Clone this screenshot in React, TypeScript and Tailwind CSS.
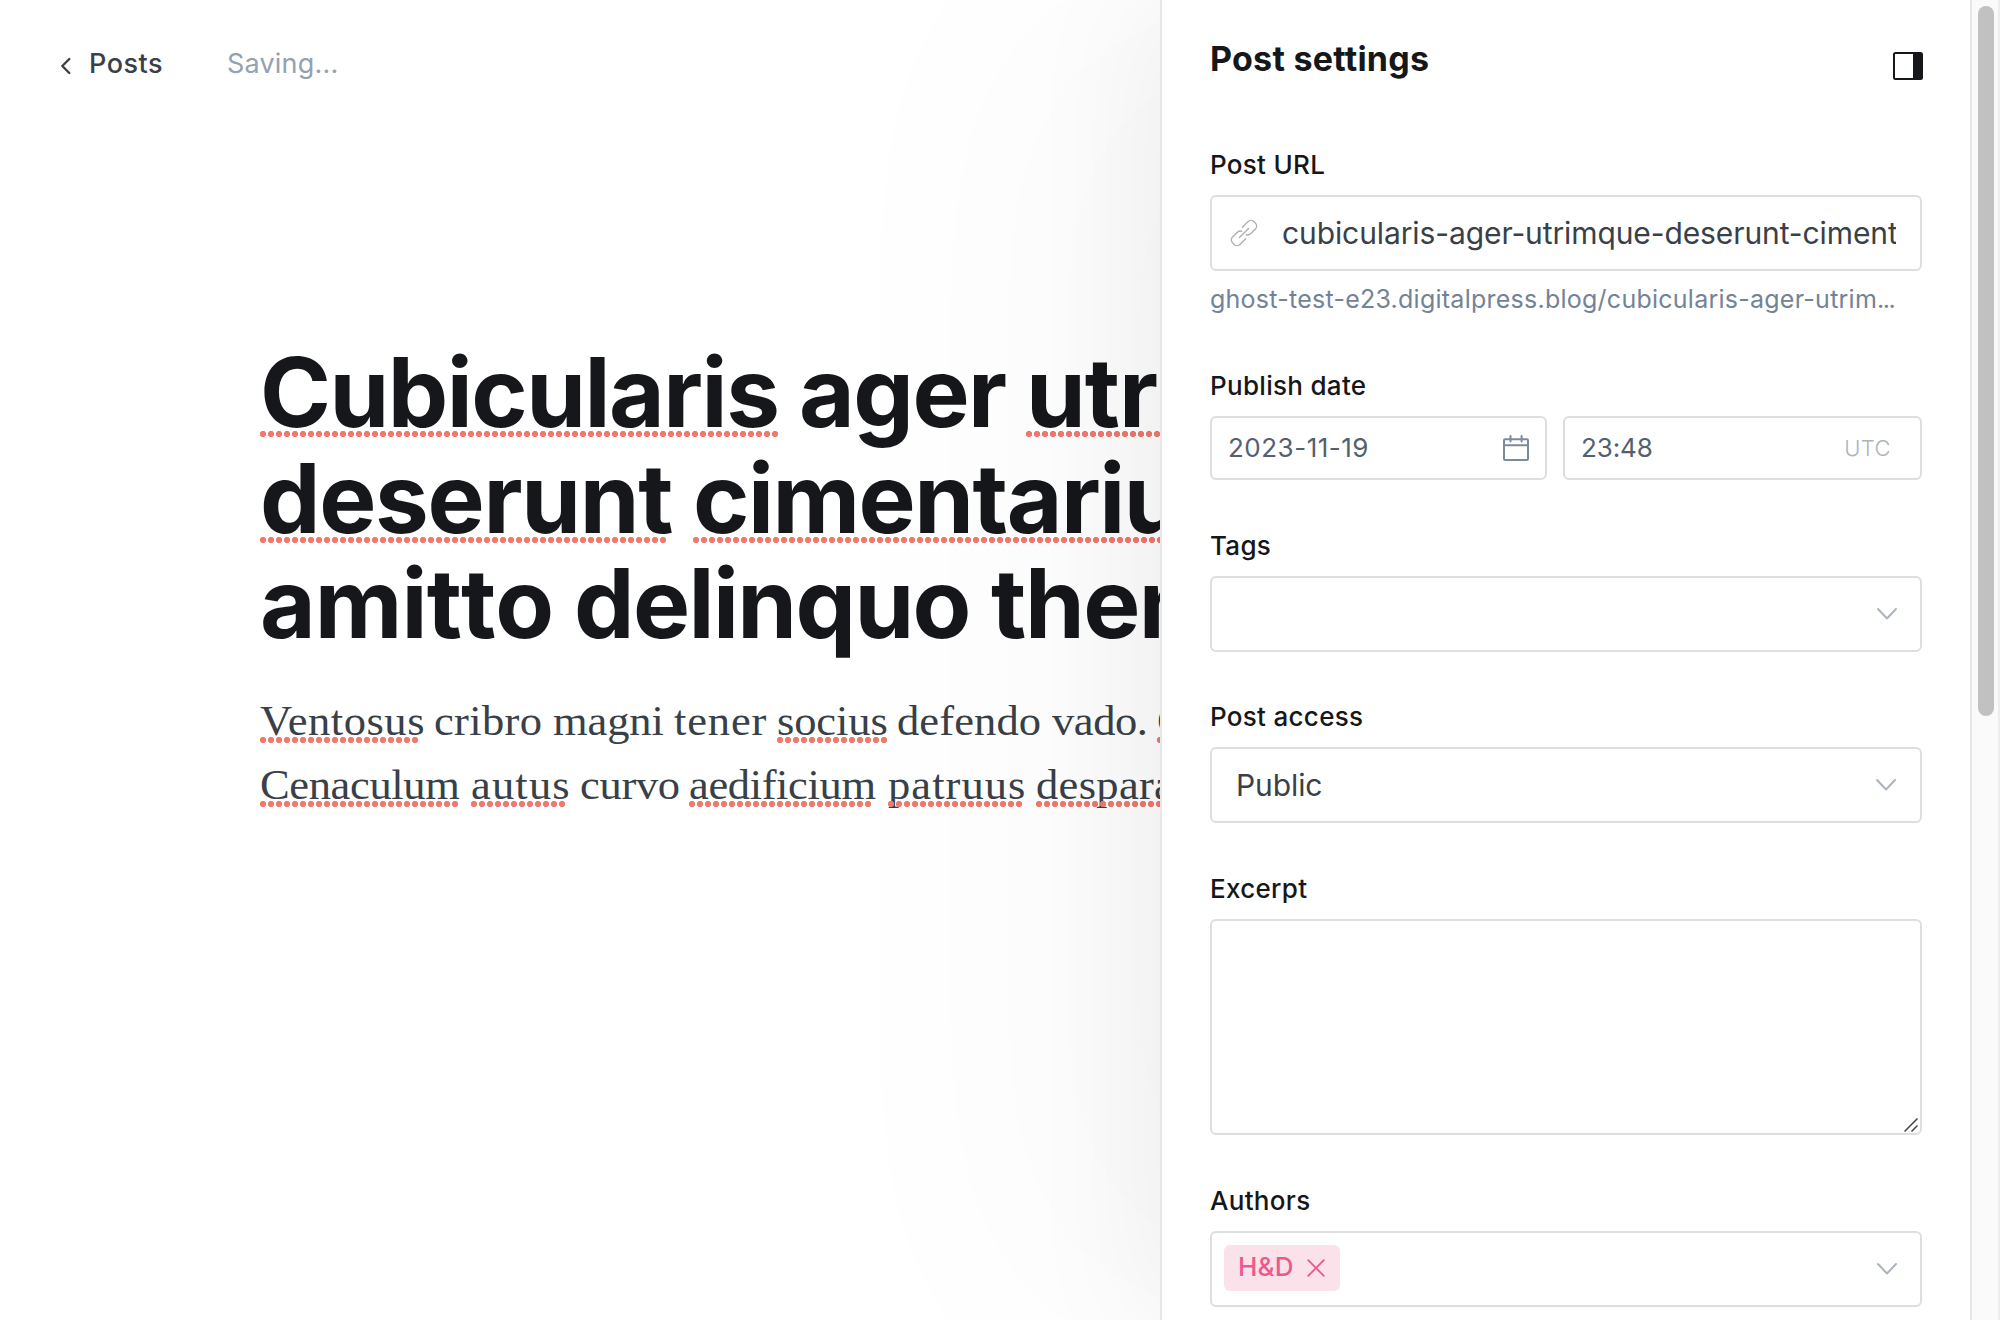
import type { ReactNode } from 'react';

type Word = { text: string; box: string; dots?: string; track: string };

const titleLines: Word[][] = [
  [
    { text: 'Cubicularis', box: 'w-[539px]', dots: 'w-[518px]', track: 'tracking-[-1.5px]' },
    { text: 'ager', box: 'w-[227px]', track: 'tracking-[-1.5px]' },
    { text: 'utrimque', box: 'w-[420px]', dots: 'w-[400px]', track: 'tracking-[-1px]' },
  ],
  [
    { text: 'deserunt', box: 'w-[433px]', dots: 'w-[406px]', track: 'tracking-[-1.3px]' },
    { text: 'cimentarius', box: 'w-[560px]', dots: 'w-[540px]', track: 'tracking-[-1.5px]' },
  ],
  [
    { text: 'amitto', box: 'w-[314px]', track: 'tracking-[-0.9px] [font-kerning:none] [font-feature-settings:"calt"_0,"liga"_0]' },
    { text: 'delinquo', box: 'w-[417px]', track: 'tracking-[-1.6px]' },
    { text: 'thema', box: 'w-[300px]', track: 'tracking-[-1.5px]' },
  ],
];

const bodyLines: Word[][] = [
  [
    { text: 'Ventosus', box: 'w-[174px]', dots: 'w-[158px]', track: 'tracking-[0.5px]' },
    { text: 'cribro', box: 'w-[119px]', track: 'tracking-[0.3px]' },
    { text: 'magni', box: 'w-[121px]', track: 'tracking-[-0.1px]' },
    { text: 'tener', box: 'w-[103px]', track: 'tracking-[0.8px]' },
    { text: 'socius', box: 'w-[120px]', dots: 'w-[110px]', track: 'tracking-[-0.1px]' },
    { text: 'defendo', box: 'w-[155px]', track: 'tracking-[0.1px]' },
    { text: 'vado.', box: 'w-[105px]', track: 'tracking-[-0.4px]' },
    { text: 'Cursus', box: 'w-[140px]', dots: 'w-[126px]', track: 'tracking-[0.2px]' },
  ],
  [
    { text: 'Cenaculum', box: 'w-[211px]', dots: 'w-[198px]', track: 'tracking-[-0.35px]' },
    { text: 'autus', box: 'w-[109px]', dots: 'w-[94px]', track: 'tracking-[1.1px]' },
    { text: 'curvo', box: 'w-[109px]', track: 'tracking-[-0.3px]' },
    { text: 'aedificium', box: 'w-[199px]', dots: 'w-[182px]', track: 'tracking-[-0.35px]' },
    { text: 'patruus', box: 'w-[148px]', dots: 'w-[134px]', track: 'tracking-[1px]' },
    { text: 'desparatus', box: 'w-[200px]', dots: 'w-[182px]', track: 'tracking-[0.3px]' },
  ],
];

const dotPattern =
  'absolute left-0 h-[6px] bg-[radial-gradient(circle_at_3px_3px,#f1786d_2.8px,transparent_3.4px)] bg-[length:8px_6px] bg-repeat-x';

function Label({ children }: { children: ReactNode }) {
  return (
    <div className="h-[47px] pt-px text-[26px] leading-8 font-medium tracking-[0.3px] text-[#15171a]">
      {children}
    </div>
  );
}

const field = 'rounded-md border-2 border-[#dddedf] bg-white';

function Chevron() {
  return (
    <svg width="22" height="14" viewBox="0 0 22 14" fill="none" stroke="#abb4be" strokeWidth="2" strokeLinecap="round" strokeLinejoin="round">
      <path d="M2 2l9 9.5L20 2" />
    </svg>
  );
}

function LinkIcon() {
  return (
    <svg width="28" height="28" viewBox="-14 -14 28 28" fill="none" stroke="#b0b1b2" strokeWidth="1.4" strokeLinecap="round">
      <g transform="rotate(-45)">
        <path d="M-6.5 0H6.5" />
        <path d="M3-5.2H11a4 4 0 0 1 4 4V1.2a4 4 0 0 1-4 4H4a4 4 0 0 1-3.6-2.3" />
        <path d="M-3 5.2H-11a4 4 0 0 1-4-4V-1.2a4 4 0 0 1 4-4H-4a4 4 0 0 1 3.6 2.3" />
      </g>
    </svg>
  );
}

function CalendarIcon() {
  return (
    <svg width="26" height="26" viewBox="0 0 26 26" fill="none" stroke="#7c8b9a" strokeWidth="2" strokeLinecap="round">
      <rect x="1" y="4.3" width="24" height="20.7" rx="1" />
      <path d="M1 10.2H25M7.5 1V6.5M18.6 1V6.5" />
    </svg>
  );
}

export default function App() {
  return (
    <div className="flex h-[1320px] w-[2000px] overflow-hidden bg-white font-[Inter,sans-serif]">
      <main className="w-[1160px] shrink-0 overflow-hidden">
        <header className="flex h-[126px] items-start pt-[48px] pl-[60px] text-[27px] leading-8">
          <svg className="mt-[9px]" width="12" height="18" viewBox="0 0 12 18" fill="none" stroke="#394047" strokeWidth="2.4" strokeLinecap="round" strokeLinejoin="round">
            <path d="M9.3 2L2.3 9l7 7" />
          </svg>
          <span className="ml-[17px] w-[138px] font-medium tracking-[0.5px] text-[#394047]">Posts</span>
          <span className="tracking-[0.2px] text-[#95a1b1]">Saving...</span>
        </header>

        <article className="pt-[214px] pl-[260px]">
          <h1 className="text-[96px] leading-[105.6px] font-bold text-[#15171a]">
            {titleLines.map((line, i) => (
              <span key={i} className="flex">
                {line.map((w) => (
                  <span key={w.text} className={`relative shrink-0 ${w.box} ${w.track}`}>
                    {w.text}
                    {w.dots && <i className={`${dotPattern} top-[91px] ${w.dots}`} />}
                  </span>
                ))}
              </span>
            ))}
          </h1>
          <p className="mt-8 font-['Liberation_Serif',serif] text-[42px] leading-[64px] text-[#394047]">
            {bodyLines.map((line, i) => (
              <span key={i} className="flex">
                {line.map((w) => (
                  <span key={w.text} className={`relative shrink-0 ${w.box} ${w.track}`}>
                    <span className="inline-block origin-left scale-x-[1.06]">{w.text}</span>
                    {w.dots && <i className={`${dotPattern} top-[48px] ${w.dots}`} />}
                  </span>
                ))}
              </span>
            ))}
          </p>
        </article>
      </main>

      <aside className="relative flex w-[812px] shrink-0 flex-col border-x-2 border-[#e7e7e8] bg-white px-12 shadow-[-150px_0_260px_rgba(0,0,0,0.022),-20px_0_120px_rgba(0,0,0,0.05)]">
        <div className="flex h-[148px] shrink-0 items-start justify-between pt-[39px]">
          <h2 className="text-[34px] leading-10 font-[650] tracking-[0.25px] text-[#15171a]">Post settings</h2>
          <svg className="mt-[13px] -mr-px" width="30" height="28" viewBox="0 0 30 28">
            <rect x="1" y="1" width="28" height="26" rx="1.5" fill="none" stroke="#15171a" strokeWidth="2" />
            <path d="M20 1H28.5V27H20Z" fill="#15171a" />
          </svg>
        </div>

        <section className="h-[221px] shrink-0">
          <Label>Post URL</Label>
          <div className={`${field} flex h-[76px] items-center pl-[18px]`}>
            <LinkIcon />
            <span className="ml-6 w-[614px] overflow-hidden text-[30px] leading-9 tracking-[-0.1px] whitespace-nowrap text-[#394047]">
              cubicularis-ager-utrimque-deserunt-cimentarius
            </span>
          </div>
          <p className="mt-[12px] text-[25px] leading-8 tracking-[0.25px] whitespace-nowrap text-[#738397]">
            ghost-test-e23.digitalpress.blog/cubicularis-ager-utrim<span className="tracking-[-1.5px]">...</span>
          </p>
        </section>

        <section className="mb-[49px] shrink-0">
          <Label>Publish date</Label>
          <div className="flex gap-4 text-[26px] leading-8 text-[#54606e]">
            <div className={`${field} flex h-16 w-[337px] items-center justify-between pr-4 pl-4`}>
              <span className="tracking-[0.5px]">2023-11-19</span>
              <CalendarIcon />
            </div>
            <div className={`${field} flex h-16 flex-1 items-center justify-between pr-[29px] pl-4`}>
              <span className="tracking-[-0.1px]">23:48</span>
              <span className="text-[22px] font-light tracking-[0.4px] text-[#abb4be]">UTC</span>
            </div>
          </div>
        </section>

        <section className="mb-12 shrink-0">
          <Label>Tags</Label>
          <div className={`${field} flex h-[76px] items-center justify-end pr-[22px]`}>
            <Chevron />
          </div>
        </section>

        <section className="mb-[49px] shrink-0">
          <Label>Post access</Label>
          <div className={`${field} flex h-[76px] items-center justify-between pr-[23px] pl-6`}>
            <span className="text-[30px] leading-9 tracking-[-0.1px] text-[#394047]">Public</span>
            <Chevron />
          </div>
        </section>

        <section className="mb-[49px] shrink-0">
          <Label>Excerpt</Label>
          <div className={`${field} flex h-[216px] items-end justify-end pr-[2px] pb-[1px]`}>
            <svg width="14" height="14" viewBox="0 0 14 14" stroke="#444" strokeWidth="1.5">
              <path d="M.5 13.5L13.5.5M7.5 13.5l6-6" />
            </svg>
          </div>
        </section>

        <section className="shrink-0">
          <Label>Authors</Label>
          <div className={`${field} flex h-[76px] items-center justify-between pr-[22px] pl-3`}>
            <span className="-mt-[2px] flex h-[46px] w-[116px] items-center rounded-md bg-[#fbe1ea] pl-[14px] text-[26px] leading-8 font-medium tracking-[0.2px] text-[#eb5a8c]">
              <span className="-mt-[2px]">H&amp;D</span>
              <svg className="ml-[13px]" width="18" height="18" viewBox="0 0 18 18" stroke="#eb5a8c" strokeWidth="1.8" strokeLinecap="round">
                <path d="M1.2 1.2l15.6 15.6M16.8 1.2L1.2 16.8" />
              </svg>
            </span>
            <Chevron />
          </div>
        </section>
      </aside>

      <div className="relative w-7 shrink-0 border-r-2 border-[#ededed] bg-[#fafafa] pt-[6px] pl-[6px]">
        <div className="h-[710px] w-4 rounded-full bg-[#c1c1c1]" />
      </div>
    </div>
  );
}
